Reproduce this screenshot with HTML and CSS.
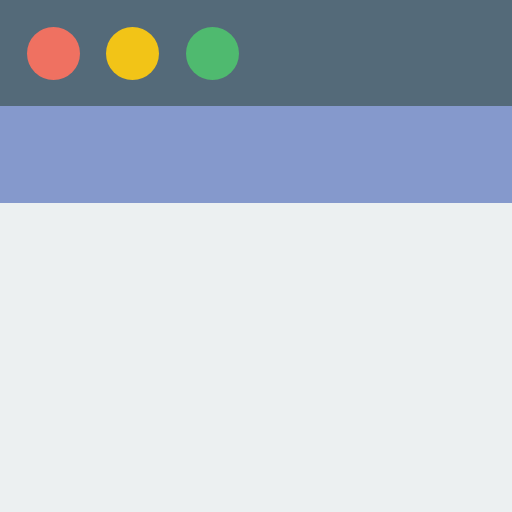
FILE: index.html
```html
<!DOCTYPE html>
<html>
<head>
<meta charset="utf-8">
<link rel="stylesheet" href="styles.css">
</head>
<body>
<div class="window">
  <div class="titlebar">
    <span class="dot red"></span>
    <span class="dot yellow"></span>
    <span class="dot green"></span>
  </div>
  <div class="toolbar"></div>
  <div class="content"></div>
</div>
</body>
</html>
```
FILE: styles.css
```css
html, body {
  margin: 0;
  padding: 0;
  width: 512px;
  height: 512px;
  overflow: hidden;
  background: #ecf0f1;
  font-family: "Liberation Sans", sans-serif;
}
.window {
  display: flex;
  flex-direction: column;
  height: 512px;
}
.titlebar {
  height: 106px;
  box-sizing: border-box;
  padding: 0 26.5px;
  display: flex;
  align-items: center;
  gap: 26.5px;
  background: #546a79;
}
.dot {
  width: 53px;
  height: 53px;
  border-radius: 50%;
  display: block;
}
.red { background: #ef7161; }
.yellow { background: #f2c417; }
.green { background: #4fba6f; }
.toolbar {
  height: 97px;
  background: #8599cc;
}
.content {
  flex: 1;
  background: #ecf0f1;
}
```
